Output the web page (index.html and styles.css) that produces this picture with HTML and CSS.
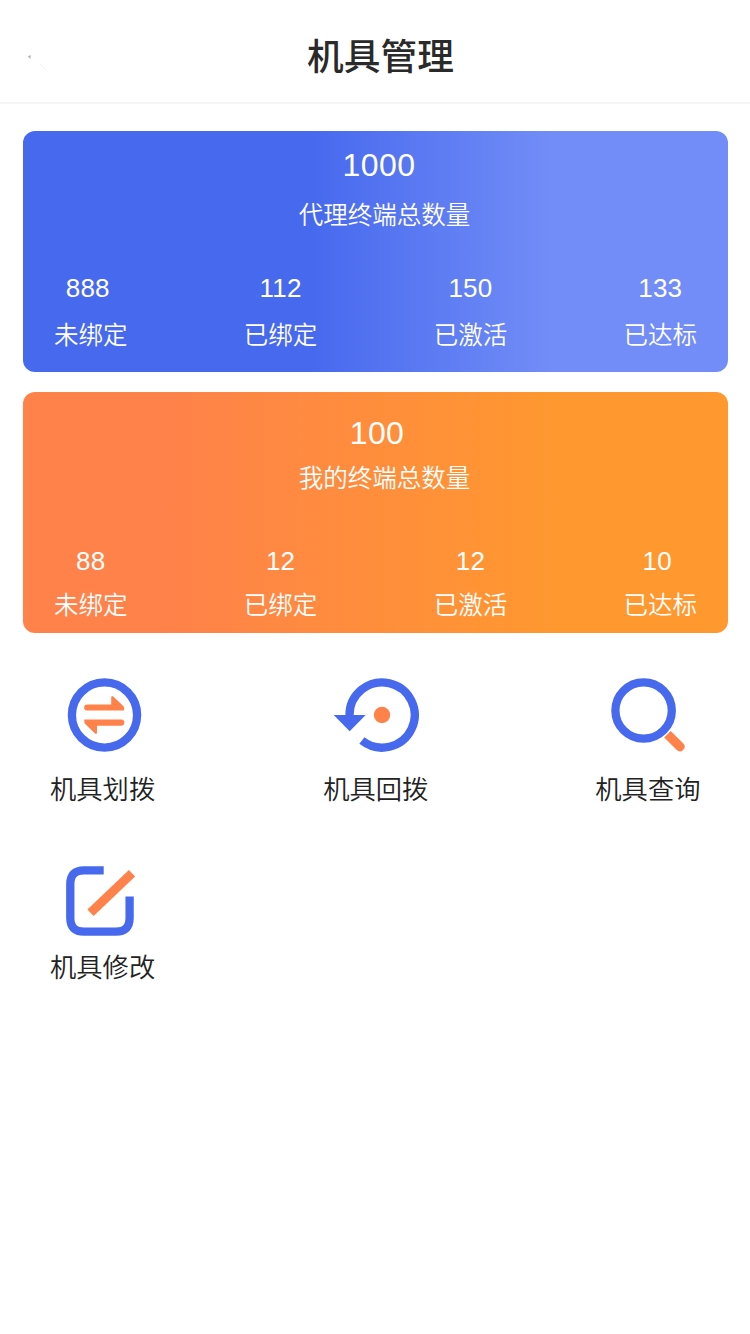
FILE: index.html
```html
<!DOCTYPE html>
<html lang="zh-CN">
<head>
    <meta charset="UTF-8">
    <meta name="viewport" content="width=device-width, initial-scale=1.0">
    <title>机具管理</title>
    <link rel="stylesheet" href="styles.css">
</head>
<body>
    <header class="header">
        <svg class="back" viewBox="0 0 20 20">
            <path d="M0 5.5l2.5-1.5v4z" fill="#aaa"/>
            <path d="M12 13l6 6" stroke="#f1f1f1" fill="none"/>
        </svg>
        <h1>机具管理</h1>
    </header>

    <section class="card card-agent">
        <div class="total">1000</div>
        <div class="total-label">代理终端总数量</div>
        <div class="stats">
            <div class="stat"><span class="num num-left">888</span><span>未绑定</span></div>
            <div class="stat"><span class="num">112</span><span>已绑定</span></div>
            <div class="stat"><span class="num">150</span><span>已激活</span></div>
            <div class="stat"><span class="num">133</span><span>已达标</span></div>
        </div>
    </section>

    <section class="card card-mine">
        <div class="total">100</div>
        <div class="total-label">我的终端总数量</div>
        <div class="stats">
            <div class="stat"><span class="num">88</span><span>未绑定</span></div>
            <div class="stat"><span class="num">12</span><span>已绑定</span></div>
            <div class="stat"><span class="num">12</span><span>已激活</span></div>
            <div class="stat"><span class="num num-left">10</span><span>已达标</span></div>
        </div>
    </section>

    <nav class="menu">
        <a class="menu-item">
            <svg viewBox="0 0 105 78">
                <circle class="line" cx="54.5" cy="39" r="32.6"/>
                <path class="fill-orange" d="M37.200 28.400h24v-6.400q0-3.300 2.300-1.300l9.800 9.200q.8.8.8 2v2.700H37.200a3.100 3.100 0 0 1 0-6.200z"/>
                <path class="fill-orange" d="M71.200 49.700H47v6.300q0 3-2.200 1.200L35 47.800q-.7-.8-.7-2v-2.400h36.900a3.100 3.100 0 0 1 0 6.300z"/>
            </svg>
            <span>机具划拨</span>
        </a>
        <a class="menu-item menu-return">
            <svg viewBox="0 0 105 78">
                <path class="line" d="M26.500 40V39A32.600 32.600 0 1 1 38.900 64.600"/>
                <path class="fill-blue" d="M10.700 39h32L26.700 55.200z"/>
                <circle class="fill-orange" cx="59" cy="39" r="8.200"/>
            </svg>
            <span>机具回拨</span>
        </a>
        <a class="menu-item">
            <svg viewBox="0 0 105 78">
                <circle class="line" cx="48.600" cy="34.500" r="28.200"/>
                <path class="fill-orange" d="M69.200 61.500l6.500-6.500L88.300 67.600a4.600 4.600 0 0 1-6.500 6.500z"/>
            </svg>
            <span>机具查询</span>
        </a>
    </nav>
    <nav class="menu menu-second">
        <a class="menu-item">
            <svg viewBox="0 0 105 78">
                <path class="line" d="M53.700 6.400H34Q20.300 6.400 20.300 20V54Q20.300 67.600 34 67.600H66Q79.600 67.600 79.600 54V32.500"/>
                <path class="pen" d="M40.500 48.800L82 9.200"/>
            </svg>
            <span>机具修改</span>
        </a>
    </nav>
</body>
</html>
```
FILE: styles.css
```css
* {
    box-sizing: border-box;
}
body {
    margin: 0;
    background-color: #fff;
    color: #222;
    font-family: "Noto Sans CJK SC", sans-serif;
}
.header {
    display: grid;
    grid-template-columns: 28px 1fr 17px;
    align-items: center;
    height: 104px;
    border-bottom: 2px solid #f4f4f4;
}
.header h1 {
    grid-column: 2;
    grid-row: 1;
    margin: 0;
    padding-top: 6px;
    color: #2a2a2a;
    font-size: 36.7px;
    font-weight: 500;
    line-height: 54px;
    text-align: center;
}
.back {
    grid-column: 2;
    grid-row: 1;
    width: 20px;
    height: 20px;
    margin-top: 20px;
}
.card {
    width: 705px;
    height: 241px;
    margin: 27px 0 0 23px;
    padding: 14px 31px 0;
    border-radius: 12px;
    color: #fff;
    font-size: 24.5px;
    font-weight: 350;
    line-height: 40px;
}
.card-agent {
    background: linear-gradient(90deg, #4769ee 41%, #728df7 75%);
}
.card-mine {
    margin-top: 20px;
    padding-top: 21px;
    background: linear-gradient(90deg, #ff824a 20%, #ff982f 76%);
}
.total,
.num {
    font-family: "Liberation Sans", Arial, sans-serif;
    font-weight: 400;
}
.total {
    padding-left: 7px;
    font-size: 32px;
    letter-spacing: 0.4px;
    text-align: center;
}
.card-mine .total {
    padding-left: 3px;
}
.total-label {
    margin-top: 9px;
    padding-left: 18px;
    text-align: center;
}
.card-mine .total-label {
    margin-top: 4px;
}
.stats {
    display: flex;
    justify-content: space-between;
    margin-top: 34px;
}
.card-mine .stats {
    margin-top: 44px;
}
.stat {
    display: flex;
    flex-direction: column;
    align-items: center;
    gap: 6px;
}
.card-mine .stat {
    gap: 3px;
}
.num {
    font-size: 26px;
    letter-spacing: 0.2px;
}
.num-left {
    padding-right: 6px;
}
.menu {
    display: flex;
    justify-content: space-between;
    margin-top: 43px;
    padding: 0 49.5px 0 50px;
}
.menu-second {
    margin-top: 56px;
}
.menu-item {
    display: flex;
    flex-direction: column;
    align-items: center;
    font-size: 26.3px;
    font-weight: 350;
    line-height: 40px;
}
.menu-return span {
    padding-left: 1px;
}
.menu-item svg {
    width: 105px;
    height: 78px;
    margin-bottom: 14px;
}
.menu-second svg {
    margin-bottom: 4px;
}
.line {
    fill: none;
    stroke: #4769ee;
    stroke-width: 8.3;
}
.pen {
    fill: none;
    stroke: #ff824a;
    stroke-width: 9;
}
.fill-blue {
    fill: #4769ee;
}
.fill-orange {
    fill: #ff824a;
}
```
